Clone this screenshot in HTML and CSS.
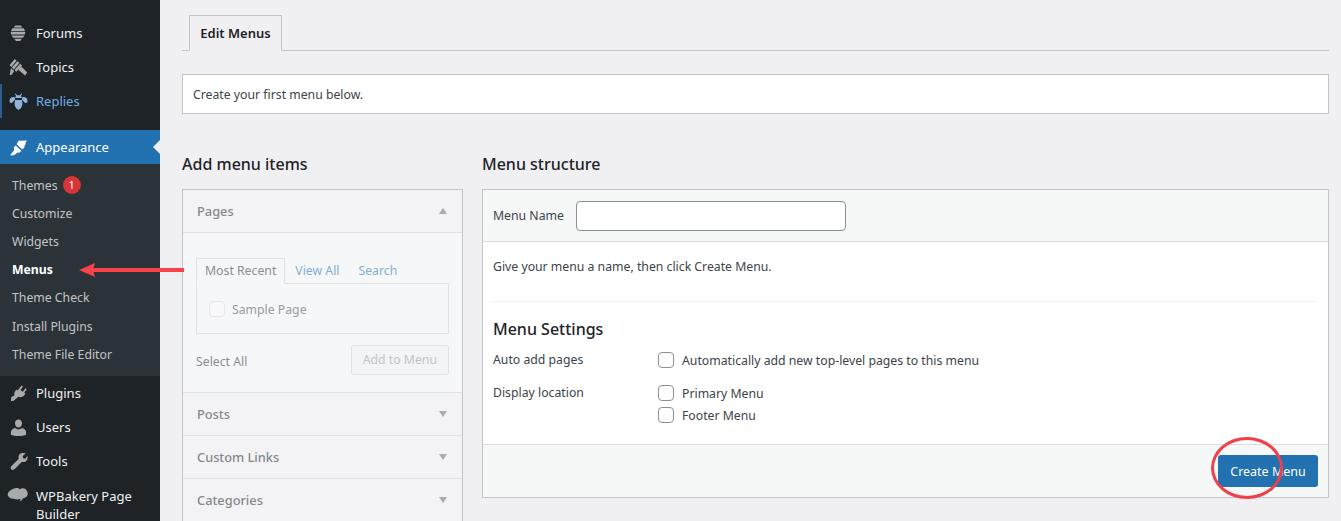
FILE: index.html
```html
<!DOCTYPE html>
<html lang="en">
<head>
    <meta charset="UTF-8">
    <title>Menus</title>
    <link rel="stylesheet" href="styles.css">
</head>
<body>
<div class="page">
    <nav class="sidebar">
        <ul class="menu menu-top">
            <li class="item">
                <svg class="icon" viewBox="0 0 20 20"><path d="M6.500 1.500h6l1.500 2.200H5zM3.500 4.500h12l1.500 3H2zM1.800 8.500h15.400l-.5 2.500H2.300zM2.800 12h13.400l-1.500 2.500H4.300zM5.500 15.500h8l-1.800 2.500H7.300z"/></svg>
                Forums
            </li>
            <li class="item">
                <svg class="icon" viewBox="0 0 20 20"><path d="M.5 7.500L6 1l2 2-5.500 6.500zM3 10L9 3.500l2 1.800L5 12zM5.700 12.500l6-6.500 2 2-6 6.500zM10.500 11.500l2.500-2.500 6 6-2 3.500-7-6zM2 10.500l3.500 3.500L2.500 18H.7z"/></svg>
                Topics
            </li>
            <li class="item item-current">
                <svg class="icon" viewBox="0 0 20 20"><path d="M7 1.500l1.500 2h3l1.500-2 .8.6-1.300 2.200c.6.500 1 1.200 1 2H6.500c0-.8.400-1.500 1-2L6.200 2.100zM6 5.500C3 4.500 1 6 .5 9c-.2 2 1 3 2.500 2.500L6.500 8zM14 5.500c3-1 5 .5 5.500 3.500.2 2-1 3-2.500 2.500L13.500 8zM6.500 8.500h7c1 2.500 1 6-1 8.500L10 19l-2.500-2c-2-2.500-2-6-1-8.500z"/></svg>
                Replies
            </li>
        </ul>

        <div class="section-open">
            <div class="item item-open">
                <svg class="icon" viewBox="0 0 20 20"><path d="M10 3L19 2.500 17 5.500l1 .5-2 2.500.5 1L14 12 8 6.500zM7 8l6 5.500-2 2c-1-.5-2-.5-3 .5-1.500 1.500-3.500 2.500-6 2.500l-.5-1C2.500 16.500 4 15 5 13.500c.7-1 .5-2 0-3.500z"/></svg>
                Appearance
            </div>
            <ul class="submenu">
                <li class="sub-item">Themes <span class="badge">1</span></li>
                <li class="sub-item">Customize</li>
                <li class="sub-item">Widgets</li>
                <li class="sub-item sub-current">Menus</li>
                <li class="sub-item">Theme Check</li>
                <li class="sub-item">Install Plugins</li>
                <li class="sub-item">Theme File Editor</li>
            </ul>
        </div>

        <ul class="menu">
            <li class="item">
                <svg class="icon" viewBox="0 0 20 20"><path d="M13.200 1.500l1.600 1.100-2.700 3.700 2.500 1.800 2.700-3.700 1.400 1.100-2.700 3.800 1.300 1-1.200 1.600c-1.700 2-4.200 2.500-6.200 1.500L4.500 18H2l.5-4.200 3.300-1.800c-.5-1.500-.2-3.200.8-4.600l1.200-1.600 1.300 1z"/></svg>
                Plugins
            </li>
            <li class="item">
                <svg class="icon" viewBox="0 0 20 20"><path d="M10 1.500c2.200 0 3.700 1.800 3.700 4s-1.500 4.500-3.700 4.500-3.700-2.300-3.700-4.500 1.500-4 3.700-4zM6.500 10.500c1 1 2.200 1.500 3.500 1.500s2.500-.5 3.500-1.500c2.500.7 4.500 2 4.500 4.500v2.500c-2 1-5 1.500-8 1.500s-6-.5-8-1.500V15c0-2.500 2-3.800 4.500-4.500z"/></svg>
                Users
            </li>
            <li class="item">
                <svg class="icon" viewBox="0 0 20 20"><path d="M17.500 1.500l-3 2.700.3 2.300 2.200.5 2.500-2.700c.5 2.700-.3 4.700-2 5.700-1.300.7-2.700.7-3.800.2L6 18c-1 1-2.500 1.200-3.500.3-1-1-.9-2.500.1-3.500l7.700-7.800c-.5-1.200-.4-2.700.3-3.800 1.400-1.900 3.900-2.500 6.900-1.700z"/></svg>
                Tools
            </li>
            <li class="item item-wrap">
                <svg class="icon icon-cloud" viewBox="0 0 24 20"><path d="M7 2c2.500-1.500 5.500-1 7 .5 2-1.500 5-1.500 7 .5 2.500 2.500 2.500 6.500-.5 8.500-1 .8-2 1-3 1-.5 2-2 3-3 3.500.3-1 .3-2 0-3-2 1-5 1-7 0-3 .5-6-1-7-4C.500 6 3.500 3 7 2z"/></svg>
                <span>WPBakery Page Builder</span>
            </li>
        </ul>
    </nav>

    <main class="content">
        <div class="tabs">
            <span class="tab">Edit Menus</span>
        </div>

        <div class="notice">Create your first menu below.</div>

        <div class="columns">
            <section class="col-left">
                <h2 class="col-title">Add menu items</h2>
                <div class="accordion">
                    <div class="acc-head acc-head-first">Pages <span class="arrow arrow-up"></span></div>
                    <div class="acc-body">
                        <div class="mini-tabs">
                            <span class="mini-tab">Most Recent</span>
                            <span class="mini-link">View All</span>
                            <span class="mini-link">Search</span>
                        </div>
                        <div class="mini-panel">
                            <span class="check check-faint"></span>
                            Sample Page
                        </div>
                        <div class="acc-actions">
                            <span class="select-all">Select All</span>
                            <span class="btn-disabled">Add to Menu</span>
                        </div>
                    </div>
                    <div class="acc-head">Posts <span class="arrow"></span></div>
                    <div class="acc-head">Custom Links <span class="arrow"></span></div>
                    <div class="acc-head">Categories <span class="arrow"></span></div>
                </div>
            </section>

            <section class="col-right">
                <h2 class="col-title">Menu structure</h2>
                <div class="panel">
                    <div class="panel-head">
                        <label class="name-label" for="menuName">Menu Name</label>
                        <input class="name-input" id="menuName" type="text">
                    </div>
                    <div class="panel-body">
                        <p class="hint">Give your menu a name, then click Create Menu.</p>
                        <div class="settings">
                            <h3 class="settings-title">Menu Settings</h3>
                            <div class="setting-row">
                                <span class="setting-label">Auto add pages</span>
                                <div class="setting-options">
                                    <div class="option"><span class="check"></span>Automatically add new top-level pages to this menu</div>
                                </div>
                            </div>
                            <div class="setting-row setting-row-last">
                                <span class="setting-label">Display location</span>
                                <div class="setting-options">
                                    <div class="option"><span class="check"></span>Primary Menu</div>
                                    <div class="option"><span class="check"></span>Footer Menu</div>
                                </div>
                            </div>
                        </div>
                    </div>
                    <div class="panel-foot">
                        <button class="btn-primary">Create Menu</button>
                    </div>
                </div>
            </section>
        </div>
    </main>

    <!-- annotations drawn over the screenshot -->
    <svg class="note-arrow" viewBox="0 0 106 14">
        <path d="M0 7L16 0 14.500 5 105 5 105 9 14.500 9 16 14z"/>
    </svg>
    <div class="note-circle"></div>
</div>
</body>
</html>
```

FILE: styles.css
```css
* {
    box-sizing: border-box;
}
html, body {
    margin: 0;
    height: 521px;
    overflow: hidden;
}
body {
    font-family: "Noto Sans", "Open Sans", Arial, sans-serif;
    font-size: 12.25px;
    color: #3c434a;
    background: #f0f0f2;
}
ul {
    list-style: none;
    margin: 0;
    padding: 0;
}
.page {
    position: relative;
    display: flex;
    height: 521px;
    overflow: hidden;
}

/* sidebar */
.sidebar {
    width: 160px;
    flex-shrink: 0;
    padding-top: 16px;
    background: #1d2327;
    color: #f0f0f1;
    font-size: 13px;
}
.item {
    display: flex;
    align-items: center;
    gap: 8px;
    height: 34px;
    padding-left: 9px;
}
.icon {
    width: 19px;
    height: 19px;
    flex-shrink: 0;
    fill: #a7aaad;
}
.item-current {
    color: #72aee6;
    box-shadow: inset 2px 0 0 #2c5f8f;
}
.item-current .icon {
    fill: #8fb4dc;
}
.section-open {
    margin: 12px 0 0;
}
.item-open {
    position: relative;
    background: #2271b1;
    color: #fff;
}
.item-open .icon {
    fill: #fff;
}
.item-open::after {
    content: "";
    position: absolute;
    right: 0;
    top: 10px;
    border: 7px solid transparent;
    border-right-color: #f0f0f2;
    border-left-width: 0;
}
.submenu {
    background: #2c3338;
    padding: 7px 0 8px;
    font-size: 12.25px;
    color: #c3c4c7;
}
.sub-item {
    display: flex;
    align-items: center;
    gap: 5px;
    height: 28.2px;
    padding-left: 12px;
}
.sub-current {
    color: #fff;
    font-weight: 700;
}
.badge {
    display: inline-block;
    width: 18px;
    height: 18px;
    border-radius: 50%;
    background: #d63638;
    color: #fff;
    font-size: 11px;
    line-height: 18px;
    text-align: center;
}
.item-wrap {
    align-items: flex-start;
    height: auto;
    padding-top: 9px;
    line-height: 18px;
}
.icon-cloud {
    width: 22px;
    height: 18px;
    margin-left: -2px;
    margin-right: -1px;
}

/* main area */
.content {
    flex: 1;
    min-width: 0;
    padding: 15px 12px 0 22px;
}
.tabs {
    height: 36px;
    padding-left: 7px;
    border-bottom: 1px solid #c3c4c7;
}
.tab {
    display: inline-block;
    width: 93px;
    height: 36px;
    border: 1px solid #c3c4c7;
    border-bottom-color: #f0f0f2;
    color: #1d2327;
    font-size: 13px;
    font-weight: 600;
    line-height: 34px;
    text-align: center;
}
.notice {
    height: 40px;
    margin-top: 23px;
    padding-left: 10px;
    border: 1px solid #c3c4c7;
    background: #fff;
    line-height: 39px;
}
.columns {
    display: flex;
    gap: 19px;
    margin-top: 38px;
}
.col-left {
    width: 281px;
    flex-shrink: 0;
}
.col-right {
    flex: 1;
    min-width: 0;
}
.col-title {
    margin: 0 0 13px;
    font-size: 16px;
    font-weight: 500;
    line-height: 24px;
    color: #1d2327;
}

/* add menu items, greyed out until a menu exists */
.accordion {
    height: 340px;
    border: 1px solid #c3c4c7;
    background: #f6f7f9;
    color: #8b8e92;
}
.acc-head {
    display: flex;
    justify-content: space-between;
    align-items: center;
    height: 43px;
    padding: 0 15px 0 14px;
    border-bottom: 1px solid #e1e2e4;
    background: #f3f3f5;
    font-size: 12.8px;
    font-weight: 500;
    color: #85888c;
}
.arrow {
    width: 0;
    height: 0;
    border: 4.5px solid transparent;
    border-top: 6px solid #aaacae;
    border-bottom: 0;
}
.arrow-up {
    border-top: 0;
    border-bottom: 6px solid #aaacae;
}
.acc-body {
    height: 160px;
    padding: 25px 13px 0;
    border-bottom: 1px solid #e1e2e4;
}
.mini-tabs {
    display: flex;
    height: 26px;
}
.mini-tab {
    position: relative;
    z-index: 1;
    height: 26px;
    padding: 0 8px;
    border: 1px solid #e1e2e4;
    border-bottom-color: #f6f7f9;
    line-height: 24px;
}
.mini-link {
    margin-left: 10px;
    color: #83aed2;
    line-height: 26px;
}
.mini-link + .mini-link {
    margin-left: 19px;
}
.mini-panel {
    display: flex;
    align-items: center;
    gap: 7px;
    height: 51px;
    margin-top: -1px;
    padding: 1px 0 0 12px;
    border: 1px solid #e1e2e4;
    color: #989a9d;
}
.acc-actions {
    display: flex;
    justify-content: space-between;
    align-items: center;
    margin-top: 11px;
}
.select-all {
    padding-top: 2px;
}
.btn-disabled {
    height: 30px;
    padding: 0 11px;
    border: 1px solid #e1e2e4;
    border-radius: 3px;
    background: #f3f4f5;
    color: #c2c4c6;
    line-height: 28px;
}

/* menu structure */
.panel {
    display: flex;
    flex-direction: column;
    height: 309px;
    border: 1px solid #c3c4c7;
    background: #fff;
}
.panel-head {
    display: flex;
    align-items: center;
    gap: 12px;
    height: 52px;
    padding-left: 10px;
    border-bottom: 1px solid #dcdcde;
    background: #f6f7f7;
}
.name-input {
    width: 270px;
    height: 30px;
    border: 1px solid #8c8f94;
    border-radius: 4px;
    background: #fff;
}
.panel-body {
    flex: 1;
    padding: 0 10px;
}
.hint {
    margin: 16px 0 0;
    line-height: 18px;
}
.settings {
    margin-top: 25px;
    padding-top: 15px;
    border-top: 1px solid #f0f0f1;
}
.settings-title {
    margin: 0;
    font-size: 16px;
    font-weight: 500;
    line-height: 24px;
    color: #1d2327;
}
.setting-row {
    display: flex;
    margin-top: 8px;
}
.setting-row-last {
    margin-top: 11px;
}
.setting-label {
    width: 165px;
    flex-shrink: 0;
    line-height: 21px;
}
.option {
    display: flex;
    align-items: center;
    gap: 8px;
    height: 22px;
}
.check {
    width: 16px;
    height: 16px;
    flex-shrink: 0;
    border: 1px solid #8c8f94;
    border-radius: 4px;
    background: #fff;
}
.check-faint {
    border-color: #e6e7e8;
    background: #f8f8fa;
}
.panel-foot {
    display: flex;
    justify-content: flex-end;
    align-items: center;
    height: 53px;
    padding-right: 10px;
    border-top: 1px solid #dcdcde;
    background: #f6f7f7;
}
.btn-primary {
    width: 100px;
    height: 32px;
    padding: 0;
    border: none;
    border-radius: 3px;
    background: #2271b1;
    color: #fff;
    font: inherit;
    font-size: 12.5px;
}

/* annotations */
.note-arrow {
    position: absolute;
    left: 79px;
    top: 263px;
    width: 106px;
    height: 14px;
    fill: #f9424a;
}
.note-circle {
    position: absolute;
    left: 1211px;
    top: 437px;
    width: 72px;
    height: 62px;
    border: 3px solid #f0404a;
    border-radius: 50%;
}
```
